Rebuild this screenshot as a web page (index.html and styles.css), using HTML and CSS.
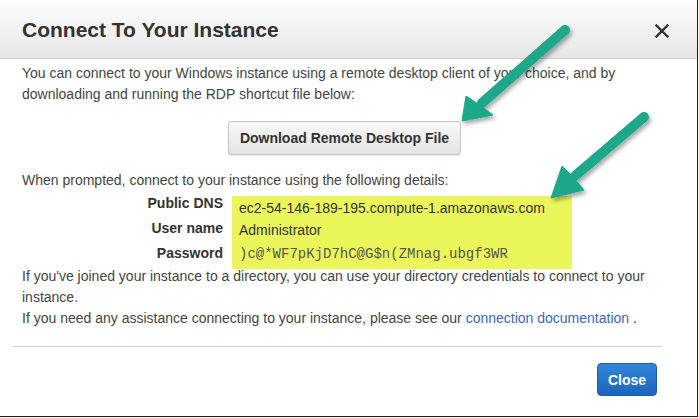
FILE: index.html
```html
<!DOCTYPE html>
<html>
<head>
<meta charset="utf-8">
<link rel="stylesheet" href="styles.css">
</head>
<body>
<div class="modal">
  <div class="modal-header">
    <h1 class="modal-title">Connect To Your Instance</h1>
    <button class="close-x" aria-label="Close">
      <svg width="14" height="14" viewBox="0 0 14 14"><path d="M1.5 1.5 L12.5 12.5 M12.5 1.5 L1.5 12.5" stroke="#333" stroke-width="2.4" stroke-linecap="square" fill="none"/></svg>
    </button>
  </div>
  <div class="modal-body">
    <p class="text">You can connect to your Windows instance using a remote desktop client of your choice, and by downloading and running the RDP shortcut file below:</p>
    <div class="btn-row"><button class="btn">Download Remote Desktop File</button></div>
    <p class="text prompt">When prompted, connect to your instance using the following details:</p>
    <div class="details">
      <div class="labels">
        <div>Public DNS</div>
        <div>User name</div>
        <div>Password</div>
      </div>
      <div class="values">
        <div class="v1">ec2-54-146-189-195.compute-1.amazonaws.com</div>
        <div class="v2">Administrator</div>
        <div class="v3 mono">)c@*WF7pKjD7hC@G$n(ZMnag.ubgf3WR</div>
      </div>
    </div>
    <p class="text after">If you've joined your instance to a directory, you can use your directory credentials to connect to your instance.<br>If you need any assistance connecting to your instance, please see our <a class="link" href="#">connection documentation</a> .</p>
  </div>
  <div class="modal-footer">
    <button class="btn-primary">Close</button>
  </div>
  <svg class="annot" width="699" height="418" viewBox="0 0 699 418">
    <defs>
      <filter id="sh" x="-20%" y="-20%" width="140%" height="140%">
        <feDropShadow dx="2" dy="3" stdDeviation="2" flood-color="#000" flood-opacity="0.35"/>
      </filter>
    </defs>
    <g filter="url(#sh)" fill="#1aa889" stroke="#1aa889">
      <line x1="565" y1="30" x2="482" y2="103" stroke-width="10" stroke-linecap="round"/>
      <polygon points="462,121 466,96 478,104 493,115" stroke-width="1" stroke-linejoin="round"/>
      <line x1="644" y1="117" x2="575" y2="176" stroke-width="10" stroke-linecap="round"/>
      <polygon points="551,198 562,166 572,176 584,190" stroke-width="1" stroke-linejoin="round"/>
    </g>
  </svg>
</div>
</body>
</html>
```

FILE: styles.css
```css
html, body {
  margin: 0;
  padding: 0;
  background: #fff;
}
body {
  font-family: "Liberation Sans", Arial, sans-serif;
  font-size: 14px;
  color: #444;
}
.modal {
  position: relative;
  box-sizing: border-box;
  width: 698px;
  height: 417px;
  border-right: 1px solid #1a1a1a;
  border-bottom: 1px solid #1a1a1a;
  background: #fff;
  overflow: hidden;
}
.modal-header {
  box-sizing: border-box;
  height: 59px;
  display: flex;
  align-items: center;
  justify-content: space-between;
  padding: 0 28px 0 22px;
  background: linear-gradient(#fdfdfd, #e7e7e7);
  border-bottom: 1px solid #cfcfcf;
}
.modal-title {
  margin: 0;
  font-size: 21px;
  font-weight: bold;
  color: #333;
  padding-top: 2px;
}
.close-x {
  border: 0;
  background: none;
  padding: 0;
  margin-top: 4px;
  width: 14px;
  height: 14px;
  display: flex;
}
.modal-body {
  padding: 4px 22px 0 22px;
}
.text {
  margin: 0;
  line-height: 21px;
}
.btn-row {
  display: flex;
  justify-content: center;
  padding-right: 8px;
  margin: 16px 0 15px;
}
.btn {
  font-family: "Liberation Sans", Arial, sans-serif;
  font-size: 14px;
  font-weight: bold;
  color: #333;
  height: 34px;
  padding: 0 11px;
  border: 1px solid #c4c4c4;
  border-radius: 3px;
  background: linear-gradient(#f9f9f9, #e4e4e4);
  box-shadow: 0 1px 1px rgba(0,0,0,0.08);
}
.details {
  display: flex;
  align-items: flex-start;
}
.labels {
  width: 201px;
  text-align: right;
  font-weight: bold;
  color: #333;
  line-height: 25px;
}
.values {
  margin: 5px 0 -3px 9px;
  width: 340px;
  height: 73px;
  background: #ebf65a;
  color: #333;
  padding-left: 7px;
  box-sizing: border-box;
}
.v1 { line-height: 24px; }
.v2 { line-height: 20px; }
.v3 { line-height: 29px; }
.mono {
  font-family: "Liberation Mono", "Courier New", monospace;
  font-size: 14px;
  color: #555;
}
.link {
  color: #3a67c2;
  text-decoration: none;
}
.modal-footer {
  margin: 17px 35px 0 12px;
  border-top: 1px solid #d2d2d2;
  padding: 16px 5px 0 0;
  display: flex;
  justify-content: flex-end;
}
.btn-primary {
  font-family: "Liberation Sans", Arial, sans-serif;
  font-size: 14px;
  font-weight: bold;
  color: #fff;
  width: 60px;
  height: 33px;
  border: 1px solid #1f5eae;
  border-radius: 4px;
  background: linear-gradient(#3386dc, #1c63bc);
  padding: 0;
}
.annot {
  position: absolute;
  left: 0;
  top: 0;
  pointer-events: none;
}
```
